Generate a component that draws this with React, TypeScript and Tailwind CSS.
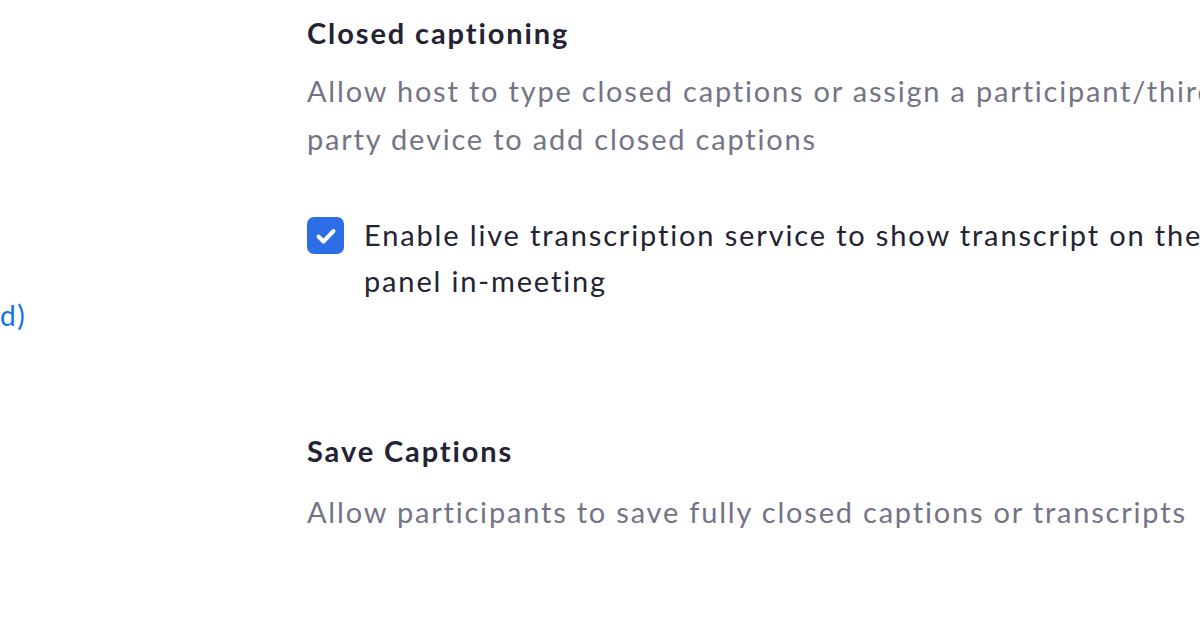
export default function App() {
  return (
    <div className="w-[1200px] h-[627px] overflow-hidden bg-white flex font-['Lato','Open_Sans',sans-serif]">
      <div className="w-[307px] shrink-0 flex flex-col">
        <div className="mt-[298px] text-[28px] leading-[34px] tracking-[1.5px] text-[#0e71eb] whitespace-nowrap">d)</div>
      </div>
      <div className="flex flex-col whitespace-nowrap">
        <div className="mt-[15px] text-[29px] leading-[36px] tracking-[1.9px] font-bold text-[#232333]">Closed captioning</div>
        <div className="mt-[16px] text-[29px] leading-[48px] tracking-[1.8px] text-[#747487]">
          Allow host to type closed captions or assign a participant/third
          <br />
          party device to add closed captions
        </div>
        <div className="mt-[49px] flex gap-[20px]">
          <div className="mt-[5px] w-[37px] h-[37px] rounded-[7px] bg-[#2d6de6] flex items-center justify-center shrink-0">
            <svg width="24" height="24" viewBox="0 0 24 24" fill="none" stroke="white" strokeWidth="4" strokeLinecap="round" strokeLinejoin="round">
              <path d="M4.5 12.5l5 5L19.5 7" />
            </svg>
          </div>
          <div className="text-[29px] leading-[46px] tracking-[1.85px] text-[#232333]">
            Enable live transcription service to show transcript on the side
            <br />
            panel in-meeting
          </div>
        </div>
        <div className="mt-[129px] text-[29px] leading-[36px] tracking-[1.9px] font-bold text-[#232333]">Save Captions</div>
        <div className="mt-[19px] text-[29px] leading-[48px] tracking-[1.8px] text-[#747487]">
          Allow participants to save fully closed captions or transcripts
        </div>
      </div>
    </div>
  )
}
